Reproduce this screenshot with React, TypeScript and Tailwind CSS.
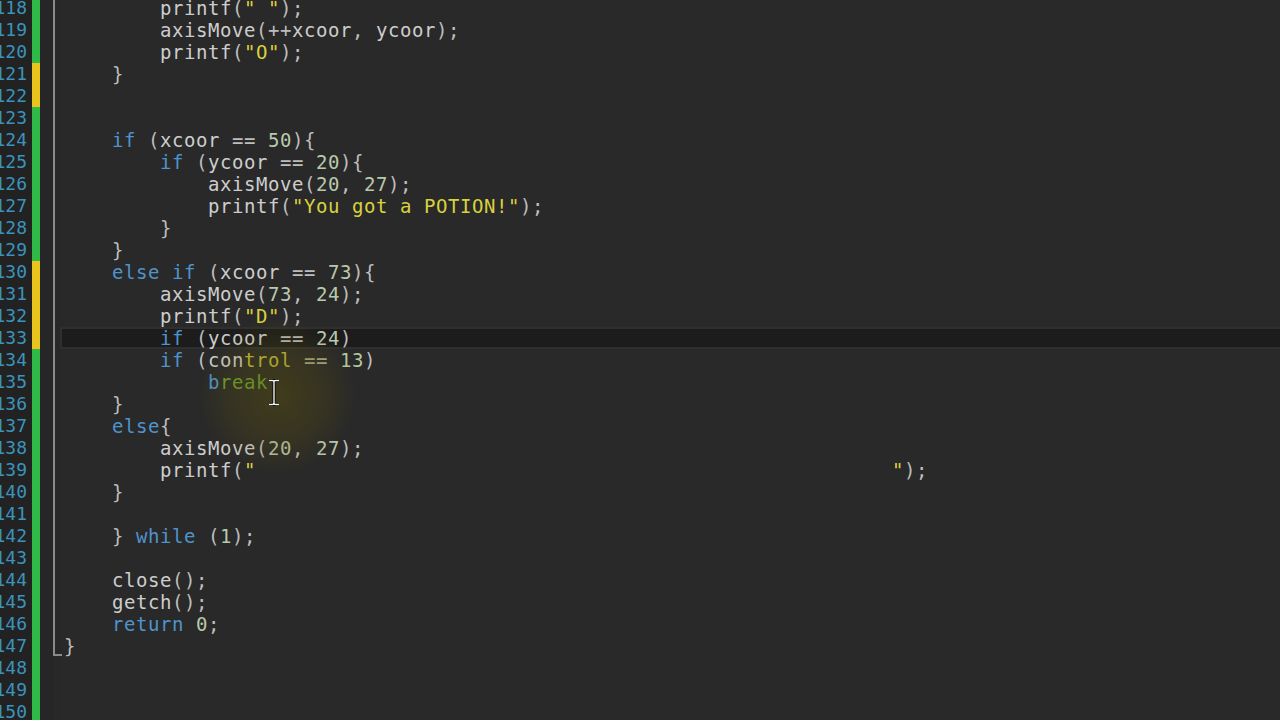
import React from "react";

type Tok = { t: string; c: string };

const KW = new Set(["if", "else", "while", "return"]);

const C = {
  kw: "text-[#4f93cc]",
  num: "text-[#b9c9ab]",
  str: "text-[#d9d13e]",
  id: "text-[#cdcdcd]",
  punc: "text-[#bdbdbd]",
};

function tokenize(s: string): Tok[] {
  const out: Tok[] = [];
  const re = /("[^"]*")|(\b\d+\b)|([A-Za-z_]\w*)|(\s+)|(.)/g;
  let m: RegExpExecArray | null;
  while ((m = re.exec(s))) {
    if (m[1]) out.push({ t: m[1], c: C.str });
    else if (m[2]) out.push({ t: m[2], c: C.num });
    else if (m[3]) out.push({ t: m[3], c: KW.has(m[3]) ? C.kw : C.id });
    else if (m[4]) out.push({ t: m[4], c: C.id });
    else out.push({ t: m[5], c: C.punc });
  }
  return out;
}

const sp = (n: number) => " ".repeat(n);

const lines: (string | Tok[])[] = [
  sp(8) + 'printf(" ");',
  sp(8) + "axisMove(++xcoor, ycoor);",
  sp(8) + 'printf("O");',
  sp(4) + "}",
  "",
  "",
  sp(4) + "if (xcoor == 50){",
  sp(8) + "if (ycoor == 20){",
  sp(12) + "axisMove(20, 27);",
  sp(12) + 'printf("You got a POTION!");',
  sp(8) + "}",
  sp(4) + "}",
  sp(4) + "else if (xcoor == 73){",
  sp(8) + "axisMove(73, 24);",
  sp(8) + 'printf("D");',
  sp(8) + "if (ycoor == 24)",
  [
    { t: sp(8), c: C.id },
    { t: "if", c: C.kw },
    { t: " (", c: C.punc },
    { t: "con", c: C.id },
    { t: "trol", c: "text-[#c2bd3a]" },
    { t: " == ", c: "text-[#a9a98a]" },
    { t: "13", c: "text-[#b4c69c]" },
    { t: ")", c: C.punc },
  ],
  [
    { t: sp(12), c: C.id },
    { t: "b", c: C.kw },
    { t: "reak", c: "text-[#6aa332]" },
  ],
  sp(4) + "}",
  sp(4) + "else{",
  sp(8) + "axisMove(20, 27);",
  sp(8) + 'printf("' + sp(53) + '");',
  sp(4) + "}",
  "",
  sp(4) + "} while (1);",
  "",
  sp(4) + "close();",
  sp(4) + "getch();",
  sp(4) + "return 0;",
  "}",
  "",
  "",
  "",
];

const yellowLines = new Set([121, 122, 130, 131, 132, 133]);

export default function App() {
  return (
    <div className="relative w-[1280px] h-[720px] overflow-hidden bg-[#292929]">
      <div className="-mt-[3px] flex flex-col">
        {lines.map((ln, i) => {
          const num = 118 + i;
          const toks = typeof ln === "string" ? tokenize(ln) : ln;
          const isCur = num === 133;
          const fold = num <= 147;
          const foldEnd = num === 147;
          return (
            <div key={num} className="flex h-[22px] shrink-0">
              <div className="w-[32px] shrink-0 overflow-hidden bg-[#222222] flex justify-end pr-[5px] text-[18px] leading-[22px] text-[#3a93bd] font-['DejaVu_Sans_Mono',monospace] whitespace-nowrap">
                <span>{num}</span>
              </div>
              <div
                className={
                  "w-[8px] shrink-0 " +
                  (yellowLines.has(num) ? "bg-[#e9c41d]" : "bg-[#2fba48]")
                }
              />
              <div className="w-[13px] shrink-0 bg-[#262626]" />
              <div className="w-[9px] shrink-0 bg-[#282828]">
                {fold && !foldEnd && (
                  <div className="h-full w-[2px] bg-[#8a8a8a]" />
                )}
                {foldEnd && (
                  <div className="h-[21px] w-[9px] border-l-2 border-b-2 border-[#8a8a8a]" />
                )}
              </div>
              <div
                className={
                  "flex-1 whitespace-pre text-[19px] tracking-[0.56px] font-['DejaVu_Sans_Mono','Liberation_Mono',monospace] " +
                  (isCur
                    ? "bg-[#1c1c1c] border-y-2 border-l-2 border-[#2f2f2f] leading-[18px] pl-[2px] -ml-[2px]"
                    : "leading-[22px] pl-[2px]")
                }
              >
                {toks.map((tk, j) => (
                  <span key={j} className={tk.c}>
                    {tk.t}
                  </span>
                ))}
              </div>
            </div>
          );
        })}
      </div>

      <div className="pointer-events-none absolute left-[195px] top-[320px] w-[165px] h-[150px] rounded-full bg-[radial-gradient(circle,rgba(100,88,8,0.4)_0%,rgba(100,88,8,0.2)_45%,rgba(100,88,8,0)_70%)]" />

      <svg
        className="pointer-events-none absolute left-[267px] top-[379px]"
        width="14"
        height="27"
        viewBox="0 0 14 27"
      >
        <path
          d="M2 1.5 H5.5 Q7 1.5 7 3 Q7 1.5 8.5 1.5 H12 M7 3 V24 M2 25.5 H5.5 Q7 25.5 7 24 Q7 25.5 8.5 25.5 H12"
          fill="none"
          stroke="#000"
          strokeWidth="3"
        />
        <path
          d="M2 1.5 H5.5 Q7 1.5 7 3 Q7 1.5 8.5 1.5 H12 M7 3 V24 M2 25.5 H5.5 Q7 25.5 7 24 Q7 25.5 8.5 25.5 H12"
          fill="none"
          stroke="#f4f4f4"
          strokeWidth="1.4"
        />
      </svg>
    </div>
  );
}
